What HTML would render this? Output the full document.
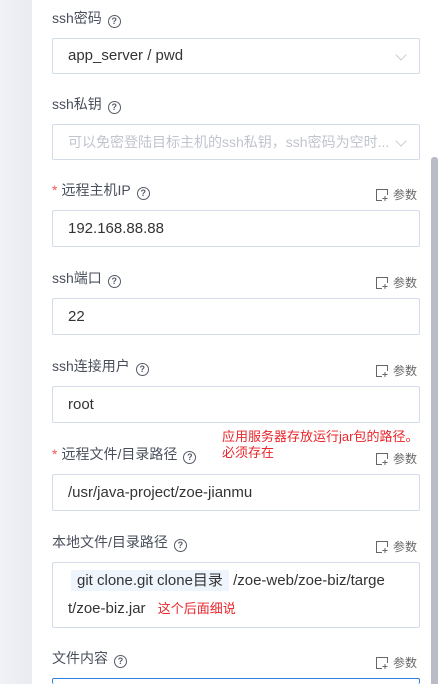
<!DOCTYPE html>
<html><head><meta charset="utf-8"><style>
*{margin:0;padding:0;box-sizing:border-box}
html,body{width:439px;height:684px;overflow:hidden}
body{background:#fff;font-family:"Liberation Sans","Noto Sans CJK SC",sans-serif;position:relative}
.side{position:absolute;left:0;top:0;width:32px;height:684px;background:linear-gradient(90deg,#f1f2f6,#e9ebf1)}
.sb{position:absolute;left:431px;top:157px;width:7px;height:527px;background:#b9bcc4;border-radius:3px 3px 0 0}
.lab{position:absolute;left:52px;font-size:14px;color:#4a4f5c;line-height:18px;white-space:nowrap}
.lab .req{color:#f05a5a;margin-right:4px}
.q{display:inline-block;width:13px;height:13px;border:1.2px solid #555b66;border-radius:50%;font-size:9px;line-height:11px;text-align:center;color:#555b66;margin-left:6px;vertical-align:-1px;font-weight:bold}
.inp{position:absolute;left:52px;width:368px;border:1px solid #d3dce8;border-radius:2px;font-size:15px;color:#333;padding-left:15px;white-space:nowrap}
.ph{color:#c0c4cc;font-size:14px}
.arr{position:absolute;right:14px;top:12px;width:8px;height:8px;border-right:1px solid #c8ccd4;border-bottom:1px solid #c8ccd4;transform:rotate(45deg)}
.param{position:absolute;left:376px;font-size:12px;color:#666;line-height:14px;white-space:nowrap}
.param svg{vertical-align:-2px;margin-right:5px}
.red{position:absolute;color:#e8262b;font-size:13px;line-height:16px}
</style></head><body>
<div class="side"></div>
<div class="sb"></div>

<div class="lab" style="top:9px">ssh密码<span class="q">?</span></div>
<div class="inp" style="top:38px;height:36px;line-height:34px">app_server / pwd<span class="arr"></span></div>

<div class="lab" style="top:95px">ssh私钥<span class="q">?</span></div>
<div class="inp" style="top:124px;height:36px;line-height:34px"><span class="ph">可以免密登陆目标主机的ssh私钥，ssh密码为空时...</span><span class="arr"></span></div>

<div class="lab" style="top:181px"><span class="req">*</span>远程主机IP<span class="q">?</span></div>
<div class="param" style="top:188px"><svg width="12" height="12" viewBox="0 0 12 12" fill="none" stroke="#666" stroke-width="1"><path d="M11.5 6V0.5H0.5V11.5H6M9 7V12M6.5 9.5H11.5"/></svg>参数</div>
<div class="inp" style="top:210px;height:37px;line-height:36px">192.168.88.88</div>

<div class="lab" style="top:269px">ssh端口<span class="q">?</span></div>
<div class="param" style="top:276px"><svg width="12" height="12" viewBox="0 0 12 12" fill="none" stroke="#666" stroke-width="1"><path d="M11.5 6V0.5H0.5V11.5H6M9 7V12M6.5 9.5H11.5"/></svg>参数</div>
<div class="inp" style="top:298px;height:37px;line-height:36px">22</div>

<div class="lab" style="top:357px">ssh连接用户<span class="q">?</span></div>
<div class="param" style="top:364px"><svg width="12" height="12" viewBox="0 0 12 12" fill="none" stroke="#666" stroke-width="1"><path d="M11.5 6V0.5H0.5V11.5H6M9 7V12M6.5 9.5H11.5"/></svg>参数</div>
<div class="inp" style="top:386px;height:37px;line-height:36px">root</div>

<div class="red" style="left:222px;top:429px">应用服务器存放运行jar包的路径。<br>必须存在</div>
<div class="lab" style="top:445px"><span class="req">*</span>远程文件/目录路径<span class="q">?</span></div>
<div class="param" style="top:452px"><svg width="12" height="12" viewBox="0 0 12 12" fill="none" stroke="#666" stroke-width="1"><path d="M11.5 6V0.5H0.5V11.5H6M9 7V12M6.5 9.5H11.5"/></svg>参数</div>
<div class="inp" style="top:474px;height:37px;line-height:36px">/usr/java-project/zoe-jianmu</div>

<div class="lab" style="top:533px">本地文件/目录路径<span class="q">?</span></div>
<div class="param" style="top:540px"><svg width="12" height="12" viewBox="0 0 12 12" fill="none" stroke="#666" stroke-width="1"><path d="M11.5 6V0.5H0.5V11.5H6M9 7V12M6.5 9.5H11.5"/></svg>参数</div>
<div class="inp" style="top:562px;height:66px;line-height:28px;padding-top:4px;white-space:normal"><span style="background:#eef5fc;padding:2px 6px;margin-left:3px">git clone.git clone目录</span> /zoe-web/zoe-biz/targe<br>t/zoe-biz.jar <span style="color:#e8262b;font-size:13px;margin-left:8px">这个后面细说</span></div>

<div class="lab" style="top:649px">文件内容<span class="q">?</span></div>
<div class="param" style="top:656px"><svg width="12" height="12" viewBox="0 0 12 12" fill="none" stroke="#666" stroke-width="1"><path d="M11.5 6V0.5H0.5V11.5H6M9 7V12M6.5 9.5H11.5"/></svg>参数</div>
<div class="inp" style="top:678px;height:6px;border-color:#2f7ee6;border-bottom:none"></div>
</body></html>
